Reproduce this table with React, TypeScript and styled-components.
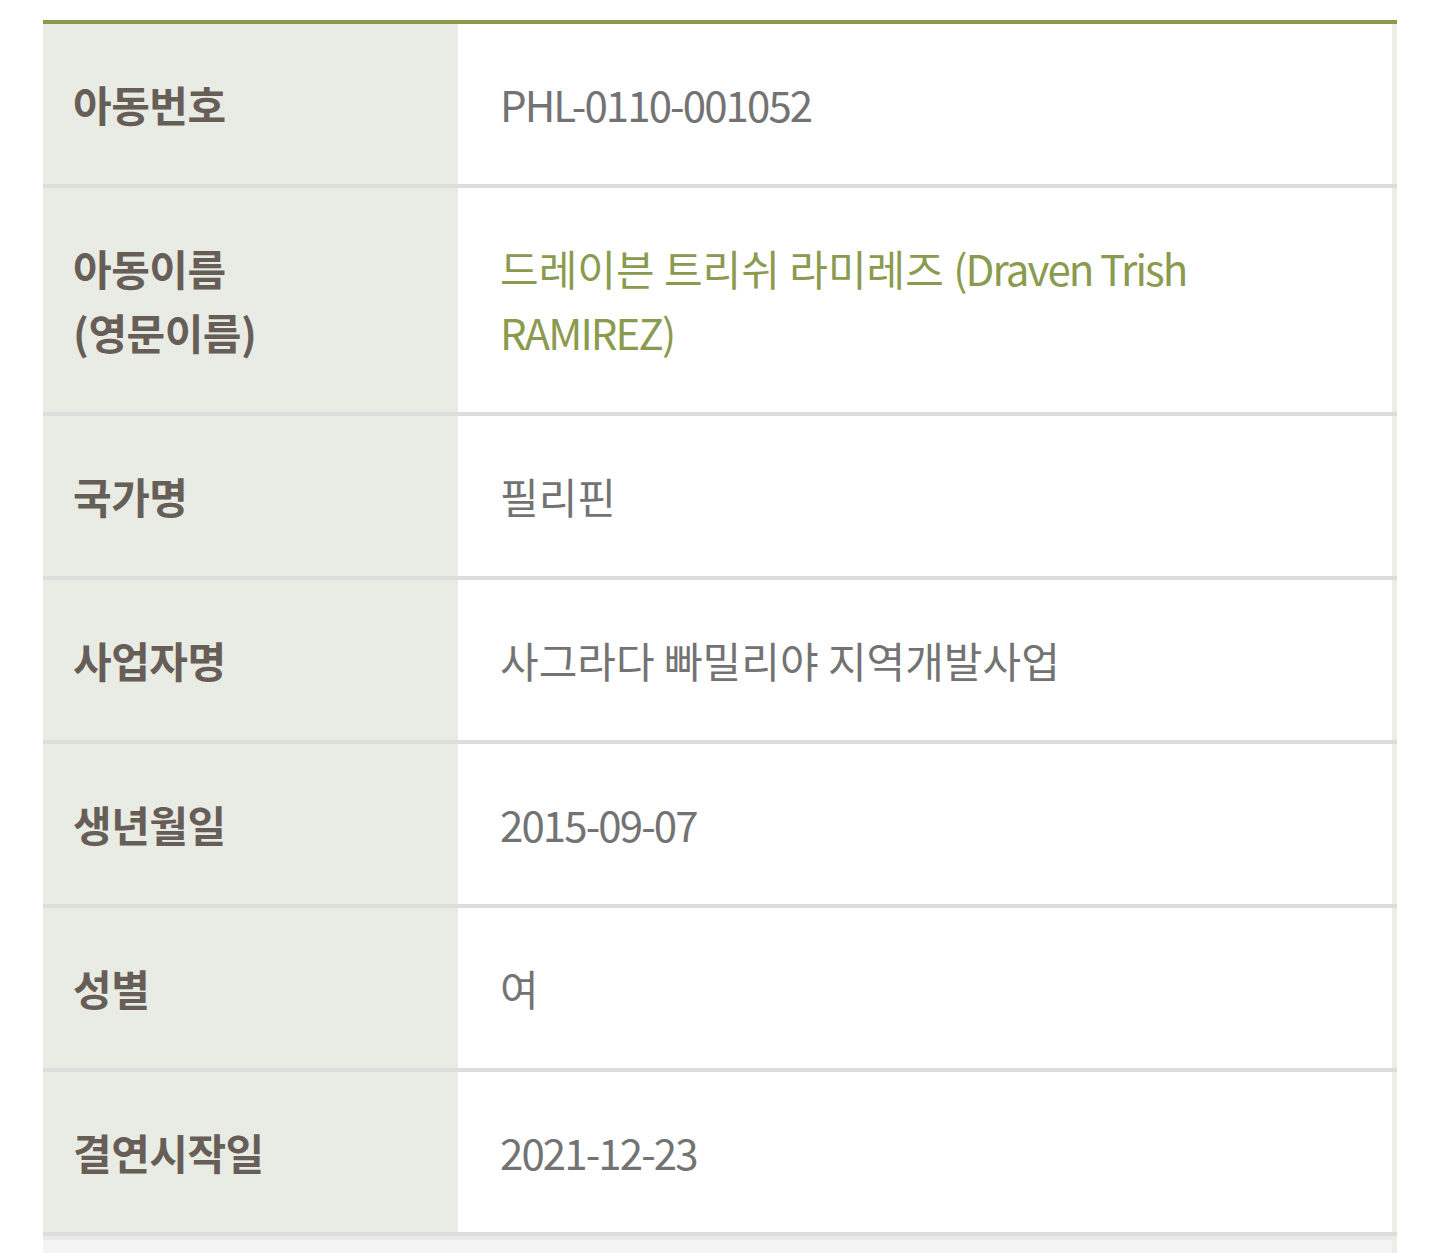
import styled, { createGlobalStyle } from "styled-components";

const GlobalStyle = createGlobalStyle`
    html, body {
        margin: 0;
        padding: 0;
        background: #ffffff;
    }
    body {
        font-family: "Noto Sans CJK KR", "Noto Sans", sans-serif;
    }
`;

const Page = styled.div`
    padding: 20px 43px 0 43px;
    height: 1253px;
    box-sizing: border-box;
    overflow: hidden;
`;

const Table = styled.section`
    width: 1354px;
    border-top: 4px solid #8a9a4b;
`;

const Row = styled.div`
    display: grid;
    grid-template-columns: 415px 1fr;
    border-bottom: 4px solid #dddddd;
`;

const Label = styled.div`
    background: #e9ece5;
    padding: 48px 0 48px 30px;
    font-size: 42px;
    line-height: 64px;
    font-weight: 700;
    color: #665e57;
    letter-spacing: -0.5px;
`;

const Value = styled.div<{ $accent?: boolean }>`
    padding: 48px 20px 48px 42px;
    font-size: 42px;
    line-height: 64px;
    font-weight: 400;
    color: ${(p) => (p.$accent ? "#8a9a4e" : "#737373")};
    letter-spacing: 0;
    border-right: 5px solid #ebede6;
`;

// latin text in the reference is set tighter than the hangul
const Latin = styled.span`
    letter-spacing: -1.9px;
`;

const Footer = styled.div`
    width: 1349px;
    height: 40px;
    border-top: 4px solid #e9e9e9;
    border-right: 5px solid #ebede6;
    background: #f4f4f4;
`;

interface Item {
    label: React.ReactNode;
    value: React.ReactNode;
    accent?: boolean;
}

const items: Item[] = [
    { label: "아동번호", value: <Latin>PHL-0110-001052</Latin> },
    {
        label: (
            <>
                아동이름
                <br />
                (영문이름)
            </>
        ),
        value: (
            <>
                드레이븐 트리쉬 라미레즈 <Latin>(Draven Trish</Latin>
                <br />
                <Latin>RAMIREZ)</Latin>
            </>
        ),
        accent: true,
    },
    { label: "국가명", value: "필리핀" },
    { label: "사업자명", value: "사그라다 빠밀리야 지역개발사업" },
    { label: "생년월일", value: <Latin>2015-09-07</Latin> },
    { label: "성별", value: "여" },
    { label: "결연시작일", value: <Latin>2021-12-23</Latin> },
];

export default function App() {
    return (
        <>
            <GlobalStyle />
            <Page>
                <Table>
                    {items.map((item, i) => (
                        <Row key={i}>
                            <Label>{item.label}</Label>
                            <Value $accent={item.accent}>{item.value}</Value>
                        </Row>
                    ))}
                </Table>
                <Footer />
            </Page>
        </>
    );
}
